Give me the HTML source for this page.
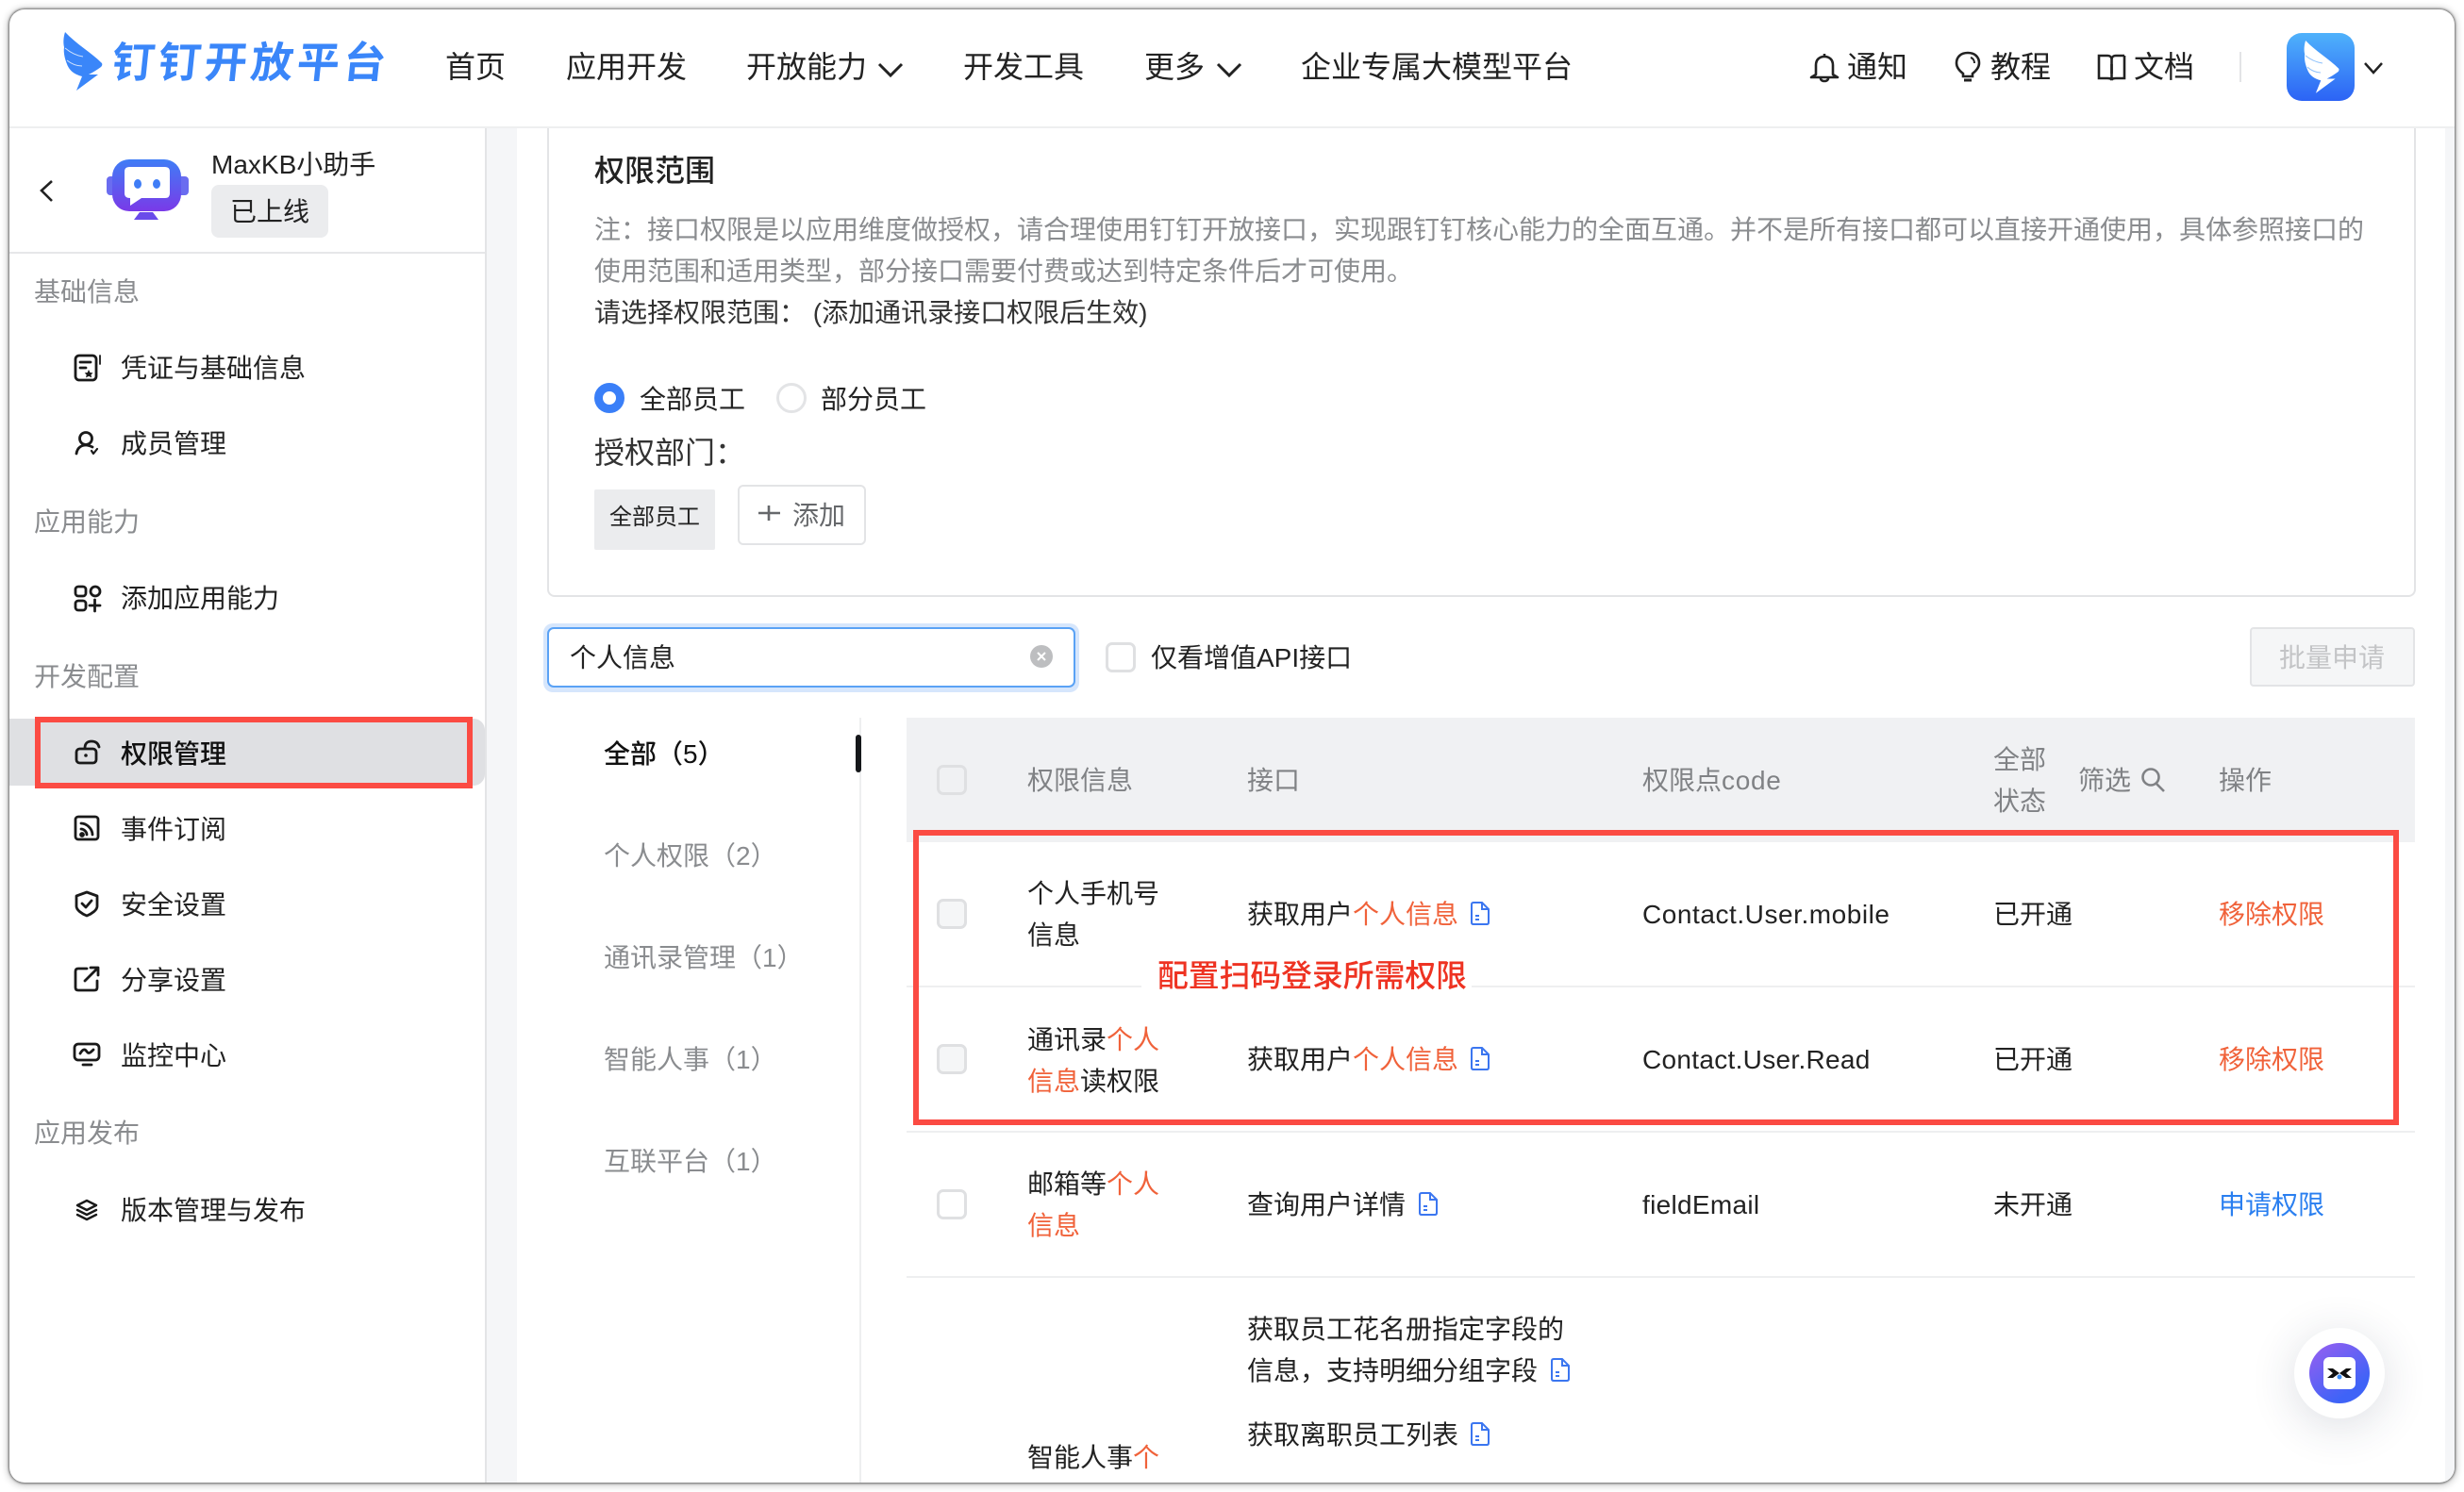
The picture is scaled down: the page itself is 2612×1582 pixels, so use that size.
<!DOCTYPE html>
<html lang="zh"><head><meta charset="utf-8"><title>钉钉开放平台</title>
<style>
html,body{margin:0;padding:0;width:2612px;height:1582px;background:#fff;overflow:hidden}
body{font-family:"Liberation Sans","Noto Sans CJK SC",sans-serif;color:#222;position:relative}
#win{position:absolute;left:10px;top:10px;width:2592px;height:1562px;border-radius:16px;background:#fff;box-shadow:0 0 2px 1px rgba(0,0,0,.5),0 1px 8px 2px rgba(0,0,0,.22)}
#root{position:absolute;left:0;top:0;width:2612px;height:1582px;clip-path:inset(10px 10px 10px 10px round 16px)}
.b{position:absolute;box-sizing:border-box}
.t{position:absolute;white-space:nowrap;line-height:44px;font-size:28px;height:44px;margin-top:.6px;margin-left:-1px}
.n{font-size:32px;color:#222;top:49px;margin-top:.4px}
.g{color:#8a8c8f;left:37px;margin-top:1.500px}
.m{left:129px;color:#222;margin-top:1.500px}
.h{color:#808285}
.o{color:#f0623a}
.tb{left:641px;color:#8a8c8f}
.cb{position:absolute;box-sizing:border-box;width:32px;height:32px;border:3px solid #dfe0e2;border-radius:7px;background:#f5f6f7}
svg{position:absolute;left:0;top:0}
</style></head>
<body>
<div id="win"></div>
<div id="root">
<!-- structure -->
<div class="b" style="left:10px;top:134px;width:2592px;height:2px;background:#eeeff0"></div>
<div class="b" style="left:516px;top:136px;width:32px;height:1440px;background:#f5f6f8"></div>
<div class="b" style="left:514px;top:136px;width:2px;height:1440px;background:#e3e4e6"></div>
<div class="b" style="left:2592px;top:136px;width:12px;height:1440px;background:#f5f6f8"></div>
<div class="b" style="left:10px;top:267px;width:504px;height:2px;background:#e6e7e9"></div>

<!-- logo + nav -->
<div class="t" style="left:120px;top:33px;font-size:45px;line-height:66px;height:66px;font-weight:700;letter-spacing:4px;color:#3a86f9;transform:skewX(-6deg)">钉钉开放平台</div>
<div class="t n" style="left:473px">首页</div>
<div class="t n" style="left:601px">应用开发</div>
<div class="t n" style="left:792px">开放能力</div>
<div class="t n" style="left:1022px">开发工具</div>
<div class="t n" style="left:1214px">更多</div>
<div class="t n" style="left:1380px">企业专属大模型平台</div>
<div class="t n" style="left:1959px">通知</div>
<div class="t n" style="left:2111px">教程</div>
<div class="t n" style="left:2263px">文档</div>
<div class="b" style="left:2374px;top:55px;width:2px;height:32px;background:#e3e4e6"></div>
<div class="b" style="left:2424px;top:35px;width:72px;height:72px;border-radius:16px;background:linear-gradient(180deg,#4fb2fb,#2c63f5)"></div>

<!-- sidebar -->
<div class="t" style="left:225px;top:152px;font-size:28px">MaxKB小助手</div>
<div class="b" style="left:224px;top:196px;width:124px;height:56px;border-radius:8px;background:#ebecee"></div>
<div class="t" style="left:245px;top:202px;font-size:28px">已上线</div>

<div class="b" style="left:10px;top:762px;width:504px;height:71px;background:#dfe0e3;border-radius:0 12px 12px 0"></div>
<div class="b" style="left:37px;top:760px;width:464px;height:76px;border:6px solid #fb4b43"></div>

<div class="t g" style="top:286px">基础信息</div>
<div class="t m" style="top:367px">凭证与基础信息</div>
<div class="t m" style="top:447px">成员管理</div>
<div class="t g" style="top:530px">应用能力</div>
<div class="t m" style="top:611px">添加应用能力</div>
<div class="t g" style="top:694px">开发配置</div>
<div class="t m" style="top:776px;font-weight:500;color:#111">权限管理</div>
<div class="t m" style="top:856px">事件订阅</div>
<div class="t m" style="top:936px">安全设置</div>
<div class="t m" style="top:1016px">分享设置</div>
<div class="t m" style="top:1096px">监控中心</div>
<div class="t g" style="top:1178px">应用发布</div>
<div class="t m" style="top:1260px">版本管理与发布</div>

<!-- card -->
<div class="b" style="left:580px;top:136px;width:1981px;height:497px;border:2px solid #e3e4e6;border-top:0;border-radius:0 0 8px 8px"></div>
<div class="t" style="left:631px;top:158px;font-size:32px;font-weight:500;color:#222">权限范围</div>
<div class="t" style="left:631px;top:221px;color:#8a8c8f">注：接口权限是以应用维度做授权，请合理使用钉钉开放接口，实现跟钉钉核心能力的全面互通。并不是所有接口都可以直接开通使用，具体参照接口的</div>
<div class="t" style="left:631px;top:265px;color:#8a8c8f">使用范围和适用类型，部分接口需要付费或达到特定条件后才可使用。</div>
<div class="t" style="left:631px;top:309px;color:#333">请选择权限范围： (添加通讯录接口权限后生效)</div>

<div class="b" style="left:630px;top:406px;width:32px;height:32px;border-radius:50%;border:9px solid #3a7ff8;background:#fff"></div>
<div class="t" style="left:679px;top:401px">全部员工</div>
<div class="b" style="left:823px;top:406px;width:32px;height:32px;border-radius:50%;border:3px solid #e3e4e6;background:#fff"></div>
<div class="t" style="left:871px;top:401px">部分员工</div>
<div class="t" style="left:631px;top:457px;font-size:32px;color:#333">授权部门：</div>
<div class="b" style="left:630px;top:519px;width:128px;height:64px;background:#ebecee;border-radius:2px"></div>
<div class="t" style="left:647px;top:526px;font-size:24px">全部员工</div>
<div class="b" style="left:782px;top:514px;width:136px;height:64px;border:2px solid #e3e4e6;border-radius:6px"></div>
<div class="t" style="left:841px;top:524px;color:#66686b">添加</div>

<!-- toolbar -->
<div class="b" style="left:576px;top:661px;width:568px;height:73px;background:#d6e6fc;border-radius:10px"></div>
<div class="b" style="left:580px;top:665px;width:560px;height:64px;background:#fff;border:2px solid #5aa2f5;border-radius:7px"></div>
<div class="t" style="left:605px;top:675px;color:#222">个人信息</div>
<div class="cb" style="left:1172px;top:681px;background:#fff"></div>
<div class="t" style="left:1221px;top:675px">仅看增值API接口</div>
<div class="b" style="left:2385px;top:665px;width:175px;height:63px;background:#f5f6f7;border:2px solid #e3e4e6;border-radius:4px"></div>
<div class="t" style="left:2417px;top:675px;color:#c3c4c6">批量申请</div>

<!-- tabs -->
<div class="b" style="left:911px;top:761px;width:2px;height:815px;background:#eeeff0"></div>
<div class="b" style="left:907px;top:779px;width:6px;height:40px;background:#15171a;border-radius:3px"></div>
<div class="t" style="left:641px;top:777px;font-weight:500;color:#111">全部（5）</div>
<div class="t tb" style="top:885px">个人权限（2）</div>
<div class="t tb" style="top:993px">通讯录管理（1）</div>
<div class="t tb" style="top:1101px">智能人事（1）</div>
<div class="t tb" style="top:1209px">互联平台（1）</div>

<!-- table -->
<div class="b" style="left:961px;top:761px;width:1599px;height:132px;background:#f0f1f3"></div>
<div class="b" style="left:961px;top:1045px;width:1599px;height:2px;background:#eeeff0"></div>
<div class="b" style="left:961px;top:1199px;width:1599px;height:2px;background:#eeeff0"></div>
<div class="b" style="left:961px;top:1353px;width:1599px;height:2px;background:#eeeff0"></div>
<div class="cb" style="left:993px;top:811px;background:#f0f1f3"></div>
<div class="t h" style="left:1090px;top:805px">权限信息</div>
<div class="t h" style="left:1323px;top:805px">接口</div>
<div class="t h" style="left:1742px;top:805px">权限点<span style="letter-spacing:.7px">code</span></div>
<div class="t h" style="left:2114px;top:783px">全部</div>
<div class="t h" style="left:2114px;top:827px">状态</div>
<div class="t h" style="left:2204px;top:805px">筛选</div>
<div class="t h" style="left:2353px;top:805px">操作</div>

<div class="cb" style="left:993px;top:953px"></div>
<div class="t" style="left:1090px;top:925px">个人手机号</div>
<div class="t" style="left:1090px;top:969px">信息</div>
<div class="t" style="left:1323px;top:947px">获取用户<span class="o">个人信息</span></div>
<div class="t" style="left:1742px;top:947px;letter-spacing:.55px">Contact.User.mobile</div>
<div class="t" style="left:2114px;top:947px">已开通</div>
<div class="t o" style="left:2353px;top:947px">移除权限</div>

<div class="b" style="left:1210px;top:1012px;width:350px;height:50px;background:#fff"></div>
<div class="t" style="left:1228px;top:1012px;font-size:32.800px;font-weight:500;color:#ee3322">配置扫码登录所需权限</div>

<div class="cb" style="left:993px;top:1107px"></div>
<div class="t" style="left:1090px;top:1080px">通讯录<span class="o">个人</span></div>
<div class="t" style="left:1090px;top:1124px"><span class="o">信息</span>读权限</div>
<div class="t" style="left:1323px;top:1101px">获取用户<span class="o">个人信息</span></div>
<div class="t" style="left:1742px;top:1101px;letter-spacing:.3px">Contact.User.Read</div>
<div class="t" style="left:2114px;top:1101px">已开通</div>
<div class="t o" style="left:2353px;top:1101px">移除权限</div>

<div class="cb" style="left:993px;top:1261px;background:#fff"></div>
<div class="t" style="left:1090px;top:1233px">邮箱等<span class="o">个人</span></div>
<div class="t o" style="left:1090px;top:1277px">信息</div>
<div class="t" style="left:1323px;top:1255px">查询用户详情</div>
<div class="t" style="left:1742px;top:1255px;letter-spacing:.3px">fieldEmail</div>
<div class="t" style="left:2114px;top:1255px">未开通</div>
<div class="t" style="left:2353px;top:1255px;color:#2a7ff0">申请权限</div>

<div class="t" style="left:1323px;top:1387px">获取员工花名册指定字段的</div>
<div class="t" style="left:1323px;top:1431px">信息，支持明细分组字段</div>
<div class="t" style="left:1323px;top:1499px">获取离职员工列表</div>
<div class="t" style="left:1090px;top:1523px">智能人事<span class="o">个</span></div>

<!-- red annotation box -->
<div class="b" style="left:968px;top:880px;width:1575px;height:313px;border:6px solid #fb4b43"></div>

<!-- floating -->
<div class="b" style="left:2432px;top:1408px;width:96px;height:96px;border-radius:50%;background:#fff;box-shadow:0 8px 48px rgba(40,50,80,.16)"></div>
<div class="b" style="left:2448px;top:1424px;width:64px;height:64px;border-radius:50%;background:linear-gradient(145deg,#9a5ff0,#3f63f7 75%)"></div>
<div class="b" style="left:2463px;top:1439px;width:34px;height:34px;border-radius:6px;background:#fff"></div>

<!-- icons -->
<svg width="2612" height="1582" viewBox="0 0 2612 1582" fill="none" xmlns="http://www.w3.org/2000/svg">
<defs>
<linearGradient id="rb" x1="0" y1="0" x2="0" y2="1"><stop offset="0" stop-color="#3f7df6"/><stop offset="1" stop-color="#7a3ae8"/></linearGradient>
<path id="wing" d="M69 34C80 46 97 56 108 67Q109 69 107 71C103 74 98 77 94 79L104 79L81 96L87 81C80 79 74 76 71 68C69 63 67 56 68 50C67 46 67 40 69 34Z"/>
<g id="doc" stroke="#3b76f0" stroke-width="2"><path d="M3 1H12L19 8V22Q19 24 17 24H3Q1 24 1 22V3Q1 1 3 1Z"/><path d="M12 1V8H19"/><path d="M5 15H9M5 19H9"/></g>
</defs>
<use href="#wing" fill="#3a86f9"/>
<path d="M69 51C75 56 81 59 88 60M71 64C76 68 82 70 87 70" stroke="#cfe2fd" stroke-width="1"/>
<use href="#wing" fill="#fff" transform="translate(2382 12.4) scale(.9)"/>
<path d="M2444 59C2449 63 2455 66 2462 67M2446 71C2450 75 2456 77 2460 77" stroke="#8cc0fb" stroke-width="1"/>

<!-- nav chevrons -->
<path d="M932 68L944 80L956 68M1291 68L1303 80L1315 68" stroke="#222" stroke-width="3"/>
<path d="M2507 67L2516 77L2525 67" stroke="#222" stroke-width="2.500"/>
<!-- bell -->
<path d="M1934 57V60M1925 79V69C1925 63 1929 60 1934 60C1939 60 1943 63 1943 69V79L1948 82H1920ZM1930 83C1930 87 1938 87 1938 83" stroke="#222" stroke-width="2.600" stroke-linejoin="round"/>
<!-- bulb -->
<path d="M2081 78C2077 75 2074 71 2074 67C2074 60 2079 56 2086 56C2093 56 2098 60 2098 67C2098 71 2095 75 2091 78V81H2081Z" stroke="#222" stroke-width="2.600"/>
<path d="M2082 85H2090" stroke="#222" stroke-width="3"/><path d="M2089 61C2092 62 2093 65 2093 67" stroke="#222" stroke-width="2"/>
<!-- book -->
<path d="M2225 59H2234C2237 59 2238.500 61 2238.500 63V85C2238 83 2236 83 2234 83H2225ZM2252 59H2243C2240 59 2238.500 61 2238.500 63M2252 59V83H2243C2241 83 2239 83 2238.500 85" stroke="#222" stroke-width="2.600"/>
<path d="M2238.500 68V78" stroke="#222" stroke-width="2.600"/>

<!-- back -->
<path d="M55 192L44 202L55 213" stroke="#222" stroke-width="2.600"/>
<!-- robot -->
<rect x="113" y="187" width="87" height="20" rx="4" fill="#6a6cf0"/>
<rect x="119" y="169" width="73" height="55" rx="18" fill="url(#rb)"/>
<path d="M137 177H175Q180 177 180 182V205Q180 210 175 210H150L138 218V210Q132 210 132 205V182Q132 177 137 177Z" fill="#fff"/>
<ellipse cx="146" cy="195" rx="4" ry="5" fill="#3f7df6"/><ellipse cx="166" cy="195" rx="4" ry="5" fill="#3f7df6"/>
<path d="M148 225H162L168 233H142Z" fill="#6a4bea"/>

<!-- sidebar icons -->
<g stroke="#1a1a1a" stroke-width="2.800" stroke-linecap="round" stroke-linejoin="round">
<!-- credential -->
<rect x="80" y="377" width="22" height="26" rx="4"/><path d="M85 384H96M85 390H91"/><path d="M106 377V386" stroke-width="1.800"/><path d="M94 392l1.500 3 3 .4-2 2 .6 3-3-1.500-3 1.500.6-3-2-2 3-.4Z" fill="#1a1a1a" stroke="none"/>
<!-- member -->
<circle cx="91" cy="465" r="6.500"/><path d="M81 481C82 474 87 472 91 472C94 472 96 473 98 474"/><path d="M97 478L99 481L103 476" stroke-width="2.200"/>
<!-- add -->
<rect x="80" y="622" width="11" height="10" rx="3"/><circle cx="101" cy="627" r="5"/><rect x="80" y="637" width="11" height="10" rx="3"/><path d="M95 642H106M100.500 636V648"/>
<!-- lock -->
<rect x="81" y="794" width="21" height="15" rx="3.500"/><path d="M90 793C90 788 93 786 97 786C101 786 104 788 105 792"/><circle cx="91" cy="801" r="1.800" fill="#1a1a1a" stroke="none"/>
<!-- rss -->
<rect x="80" y="866" width="24" height="24" rx="3" /><path d="M86 873C92 873 98 879 98 885M86 879C89 879 92 882 92 885"/><circle cx="87" cy="885" r="1.500" fill="#1a1a1a"/>
<!-- shield -->
<path d="M92 946L103 950V961C103 965 97 969 92 971C87 969 81 965 81 961V950Z"/><path d="M87 958L91 962L97 955"/>
<!-- share -->
<path d="M92 1027H83Q80 1027 80 1030V1047Q80 1050 83 1050H100Q103 1050 103 1047V1040M90 1040L103 1027M96 1026H104V1034"/>
<!-- monitor -->
<rect x="79" y="1107" width="26" height="17" rx="4"/><path d="M85 1117C88 1112 90 1112 92 1115C94 1118 96 1116 99 1113M88 1129H97"/>
<!-- layers -->
<path d="M92 1273L102 1278L92 1283L82 1278Z" stroke-width="2.400"/><path d="M82 1283L92 1288L102 1283M82 1288L92 1293L102 1288" stroke-width="2.400"/>
</g>

<!-- add plus -->
<path d="M815 536V552M804 544H827" stroke="#66686b" stroke-width="2.600"/>
<!-- clear -->
<circle cx="1104" cy="696" r="12" fill="#bdbec0"/><path d="M1100 692L1108 700M1108 692L1100 700" stroke="#fff" stroke-width="2"/>
<!-- search in header -->
<circle cx="2280" cy="824" r="8.500" stroke="#808285" stroke-width="2.600"/><path d="M2286 831L2294 839" stroke="#808285" stroke-width="2.600"/>

<!-- doc icons -->
<use href="#doc" transform="translate(1559 956)"/>
<use href="#doc" transform="translate(1559 1110)"/>
<use href="#doc" transform="translate(1504 1264)"/>
<use href="#doc" transform="translate(1644 1440)"/>
<use href="#doc" transform="translate(1559 1508)"/>

<!-- float mark -->
<path d="M2467 1451L2473 1451L2480 1456L2473 1461L2467 1461L2473 1456ZM2493 1451L2487 1451L2480 1456L2487 1461L2493 1461L2487 1456Z" fill="#111"/>
<circle cx="2480" cy="1460" r="2.500" fill="#3b8cf5"/>
</svg>
</div>
</body></html>
